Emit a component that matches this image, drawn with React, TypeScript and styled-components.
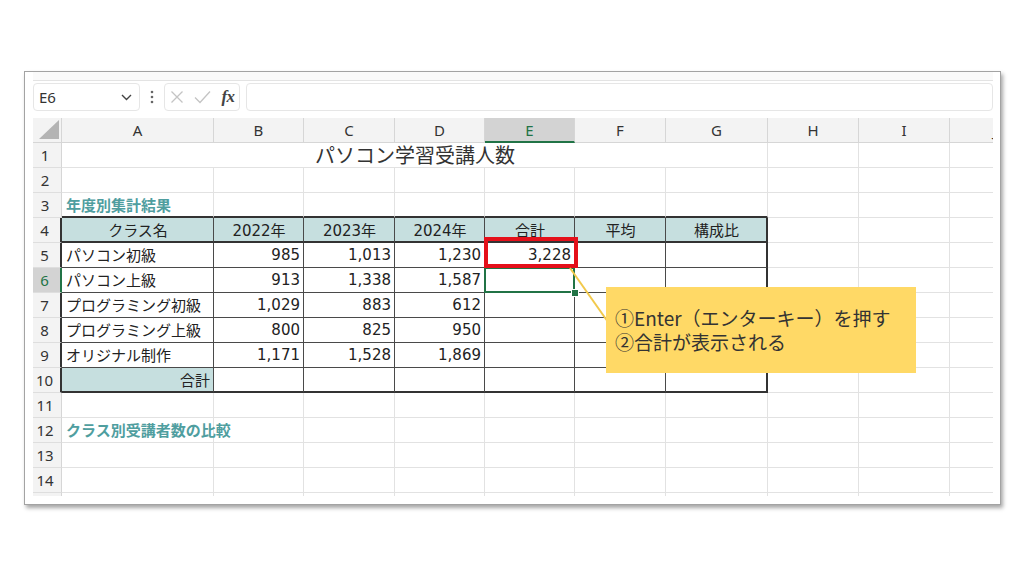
import React from 'react';
import styled, { createGlobalStyle } from 'styled-components';

const GlobalStyle = createGlobalStyle`
  html, body { margin: 0; padding: 0; background: #ffffff; }
  body { font-family: "Noto Sans CJK JP", "Noto Sans", sans-serif; }
`;

const COL_WIDTHS = [29, 152, 90, 91, 90, 90, 91, 102, 91, 91, 91];
const COL_NAMES = ['A', 'B', 'C', 'D', 'E', 'F', 'G', 'H', 'I', 'J'];

const LIGHT = '1px solid #e2e2e2';
const INNER = '1px solid #4a4a4a';
const THICK = '2px solid #333333';
const GREEN = '#217346';
const TEAL_BG = '#c6dfdf';

const Page = styled.div`
  width: 1024px;
  height: 576px;
  box-sizing: border-box;
  padding: 71px 0 0 24px;
  background: #ffffff;
  overflow: hidden;
`;

const Frame = styled.div`
  width: 977px;
  height: 434px;
  box-sizing: border-box;
  border: 1px solid #a3a3a3;
  box-shadow: 2px 3px 4px rgba(0, 0, 0, 0.35);
  background: #ffffff;
  padding-left: 8px;
  display: flex;
  flex-direction: column;
  overflow: hidden;
`;

const TopStrip = styled.div`
  width: 960px;
  height: 8px;
  background: #fafafa;
  border-bottom: 1px solid #e3e3e3;
`;

const FormulaBar = styled.div`
  display: flex;
  align-items: center;
  width: 960px;
  height: 28px;
  margin: 2px 0 7px;
`;

const NameBox = styled.div`
  width: 107px;
  height: 28px;
  box-sizing: border-box;
  border: 1px solid #e6e6e6;
  border-radius: 4px;
  background: #fff;
  display: flex;
  align-items: center;
  justify-content: space-between;
  padding: 0 7px 0 5px;
  font-family: "Noto Sans", sans-serif;
  font-size: 15px;
  color: #333;
`;

const Dots = styled.div`
  width: 24px;
  display: flex;
  justify-content: center;
  align-items: center;
`;

const FxBox = styled.div`
  width: 76px;
  height: 28px;
  box-sizing: border-box;
  border: 1px solid #e6e6e6;
  border-radius: 4px;
  background: #fff;
  display: grid;
  grid-template-columns: 24px 26px 26px;
  align-items: center;
  justify-items: center;
`;

const FxText = styled.span`
  font-family: "Liberation Serif", serif;
  font-style: italic;
  font-weight: bold;
  font-size: 17px;
  color: #444;
  letter-spacing: -0.5px;
`;

const FormulaInput = styled.div`
  flex: 1;
  margin-left: 6px;
  height: 28px;
  box-sizing: border-box;
  border: 1px solid #e6e6e6;
  border-radius: 4px;
  background: #fff;
`;

const Sheet = styled.div`
  position: relative;
  display: grid;
  grid-template-columns: ${COL_WIDTHS.map((w) => `${w}px`).join(' ')};
  grid-auto-rows: 25px;
  width: 960px;
  height: 378px;
  overflow: hidden;
`;

const Corner = styled.div`
  box-sizing: border-box;
  background: #f3f3f3;
  border-right: 1px solid #d6d6d6;
  border-bottom: 1px solid #d6d6d6;
  display: flex;
  align-items: flex-end;
  justify-content: flex-end;
  padding: 0 2px 3px 0;
`;

const ColHeader = styled.div<{ $sel?: boolean }>`
  box-sizing: border-box;
  background: ${(p) => (p.$sel ? '#d3d3d3' : '#f3f3f3')};
  color: ${(p) => (p.$sel ? GREEN : '#333')};
  border-right: 1px solid #d6d6d6;
  border-bottom: ${(p) => (p.$sel ? `2px solid ${GREEN}` : '1px solid #d6d6d6')};
  display: flex;
  align-items: center;
  justify-content: center;
  font-family: "Noto Sans", sans-serif;
  font-size: 15px;
`;

const RowHeader = styled.div<{ $sel?: boolean; $rb: string }>`
  box-sizing: border-box;
  background: ${(p) => (p.$sel ? '#d3d3d3' : '#f3f3f3')};
  color: ${(p) => (p.$sel ? GREEN : '#333')};
  border-right: ${(p) => p.$rb};
  border-bottom: 1px solid #dedede;
  display: flex;
  align-items: center;
  justify-content: center;
  padding-right: 4px;
  font-family: "Noto Sans", sans-serif;
  font-size: 15px;
`;

const Cell = styled.div<{
  $rb: string;
  $bb: string;
  $bg?: string;
  $align?: 'left' | 'center' | 'right';
  $span?: number;
  $over?: boolean;
}>`
  position: relative;
  z-index: ${(p) => (p.$over ? 1 : 'auto')};
  box-sizing: border-box;
  grid-column: ${(p) => (p.$span ? `span ${p.$span}` : 'auto')};
  border-right: ${(p) => p.$rb};
  border-bottom: ${(p) => p.$bb};
  background: ${(p) => p.$bg || '#fff'};
  display: flex;
  align-items: center;
  justify-content: ${(p) =>
    p.$align === 'right' ? 'flex-end' : p.$align === 'center' ? 'center' : 'flex-start'};
  padding: 0 3px 1px 4px;
  font-family: "DejaVu Sans", "Noto Sans CJK JP", sans-serif;
  font-size: 15px;
  color: #222;
  white-space: nowrap;
`;

const JpText = styled.span`
  font-family: "Noto Sans CJK JP", sans-serif;
`;

const SheetTitle = styled.span`
  font-family: "Noto Sans CJK JP", sans-serif;
  font-size: 20px;
  color: #333;
`;

const SectionTitle = styled.span`
  font-family: "Noto Sans CJK JP", sans-serif;
  font-weight: bold;
  font-size: 15px;
  color: #4f9e9f;
`;

const Selection = styled.div`
  position: absolute;
  top: -1px;
  left: -1px;
  right: -1px;
  bottom: -1px;
  border: 2px solid ${GREEN};
  pointer-events: none;
  z-index: 2;
`;

const FillHandle = styled.div`
  position: absolute;
  right: -5px;
  bottom: -5px;
  width: 6px;
  height: 6px;
  background: ${GREEN};
  border: 1px solid #fff;
  z-index: 3;
`;

const RedMark = styled.div`
  position: absolute;
  left: -1px;
  top: -6px;
  width: 94px;
  height: 31px;
  box-sizing: border-box;
  border: 4px solid #e4101a;
  z-index: 4;
  pointer-events: none;
`;

const Leader = styled.svg`
  position: absolute;
  left: 535px;
  top: 148px;
  z-index: 4;
  overflow: visible;
`;

const Callout = styled.div`
  position: absolute;
  left: 573px;
  top: 169px;
  width: 310px;
  height: 86px;
  box-sizing: border-box;
  background: #ffd966;
  display: flex;
  flex-direction: column;
  justify-content: center;
  padding: 0 0 1px 9px;
  font-family: "Noto Sans CJK JP", sans-serif;
  font-size: 19px;
  line-height: 24px;
  color: #333;
  z-index: 5;
`;

type Align = 'left' | 'center' | 'right';
type CellDef = { text?: string; align?: Align; kind?: 'head' | 'section' | 'total' };

const TABLE_HEAD = ['クラス名', '2022年', '2023年', '2024年', '合計', '平均', '構成比'];
const DATA: [string, string, string, string, string][] = [
  ['パソコン初級', '985', '1,013', '1,230', '3,228'],
  ['パソコン上級', '913', '1,338', '1,587', ''],
  ['プログラミング初級', '1,029', '883', '612', ''],
  ['プログラミング上級', '800', '825', '950', ''],
  ['オリジナル制作', '1,171', '1,528', '1,869', ''],
];

function buildRow(r: number): CellDef[] {
  const cells: CellDef[] = Array.from({ length: 10 }, () => ({}));
  if (r === 3) cells[0] = { text: '年度別集計結果', kind: 'section' };
  if (r === 12) cells[0] = { text: 'クラス別受講者数の比較', kind: 'section' };
  if (r === 4) TABLE_HEAD.forEach((t, i) => (cells[i] = { text: t, align: 'center', kind: 'head' }));
  if (r >= 5 && r <= 9) {
    const d = DATA[r - 5];
    cells[0] = { text: d[0], align: 'left' };
    for (let i = 1; i < 5; i++) cells[i] = { text: d[i], align: 'right' };
  }
  if (r === 10) cells[0] = { text: '合計', align: 'right', kind: 'total' };
  return cells;
}

function borders(r: number, c: number) {
  const inTable = r >= 4 && r <= 10 && c >= 1 && c <= 7;
  let rb = LIGHT;
  let bb = LIGHT;
  if (inTable) {
    rb = c === 7 ? THICK : INNER;
    bb = r === 4 || r === 10 ? THICK : INNER;
  } else if (r === 3 && c >= 1 && c <= 7) {
    bb = THICK;
  }
  return { rb, bb };
}

const ChevronIcon = () => (
  <svg width="11" height="7" viewBox="0 0 11 7">
    <polyline points="1,1 5.5,5.5 10,1" fill="none" stroke="#444" strokeWidth="1.4" />
  </svg>
);

const DotsIcon = () => (
  <svg width="4" height="14" viewBox="0 0 4 14">
    <circle cx="2" cy="2" r="1.3" fill="#666" />
    <circle cx="2" cy="7" r="1.3" fill="#666" />
    <circle cx="2" cy="12" r="1.3" fill="#666" />
  </svg>
);

const CrossIcon = () => (
  <svg width="14" height="14" viewBox="0 0 14 14">
    <path d="M1.5 1.5 L12.5 12.5 M12.5 1.5 L1.5 12.5" stroke="#c4c4c4" strokeWidth="1.3" fill="none" />
  </svg>
);

const CheckIcon = () => (
  <svg width="17" height="14" viewBox="0 0 17 14">
    <path d="M1 7.5 L6 12.5 L16 1.5" stroke="#c4c4c4" strokeWidth="1.3" fill="none" />
  </svg>
);

const CornerIcon = () => (
  <svg width="20" height="19" viewBox="0 0 20 19">
    <polygon points="20,0 20,19 0,19" fill="#b4b4b4" />
  </svg>
);

export default function App() {
  const rows = Array.from({ length: 15 }, (_, i) => i + 1);
  return (
    <Page>
      <GlobalStyle />
      <Frame>
        <TopStrip />
        <FormulaBar>
          <NameBox>
            <span>E6</span>
            <ChevronIcon />
          </NameBox>
          <Dots>
            <DotsIcon />
          </Dots>
          <FxBox>
            <CrossIcon />
            <CheckIcon />
            <FxText>fx</FxText>
          </FxBox>
          <FormulaInput />
        </FormulaBar>
        <Sheet>
          <Corner>
            <CornerIcon />
          </Corner>
          {COL_NAMES.map((n) => (
            <ColHeader key={n} $sel={n === 'E'}>
              {n}
            </ColHeader>
          ))}
          {rows.map((r) => {
            const cells = buildRow(r);
            const headRb =
              r === 6 ? `2px solid ${GREEN}` : r >= 4 && r <= 10 ? THICK : '1px solid #d6d6d6';
            return (
              <React.Fragment key={r}>
                <RowHeader $sel={r === 6} $rb={headRb}>
                  {r <= 14 ? r : ''}
                </RowHeader>
                {r === 1 ? (
                  <>
                    <Cell $rb={LIGHT} $bb={LIGHT} $span={7} $align="center">
                      <SheetTitle>パソコン学習受講人数</SheetTitle>
                    </Cell>
                    {[8, 9, 10].map((c) => (
                      <Cell key={c} $rb={LIGHT} $bb={LIGHT} />
                    ))}
                  </>
                ) : (
                  cells.map((cell, i) => {
                    const c = i + 1;
                    const { rb, bb } = borders(r, c);
                    const bg = cell.kind === 'head' || cell.kind === 'total' ? TEAL_BG : undefined;
                    return (
                      <Cell
                        key={c}
                        $rb={rb}
                        $bb={bb}
                        $bg={bg}
                        $align={cell.align}
                        $over={cell.kind === 'section'}
                      >
                        {cell.kind === 'section' ? (
                          <SectionTitle>{cell.text}</SectionTitle>
                        ) : cell.text && !/^\d/.test(cell.text) ? (
                          <JpText>{cell.text}</JpText>
                        ) : (
                          cell.text
                        )}
                        {r === 5 && c === 5 && <RedMark />}
                        {r === 6 && c === 5 && (
                          <>
                            <Selection />
                            <FillHandle />
                          </>
                        )}
                      </Cell>
                    );
                  })
                )}
              </React.Fragment>
            );
          })}
          <Leader width="42" height="58" viewBox="0 0 42 58">
            <line x1="2" y1="2" x2="40" y2="56" stroke="#f2c94c" strokeWidth="2" />
          </Leader>
          <Callout>
            <div>①Enter（エンターキー）を押す</div>
            <div>②合計が表示される</div>
          </Callout>
        </Sheet>
      </Frame>
    </Page>
  );
}
